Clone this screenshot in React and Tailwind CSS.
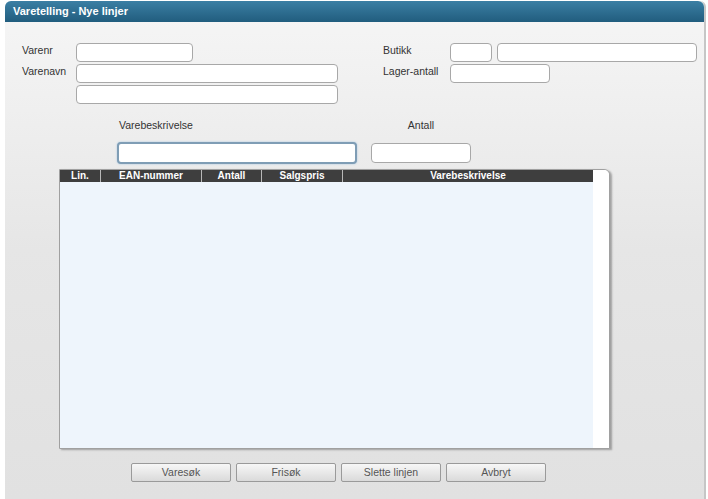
import React from 'react';

const font = { fontFamily: '"Liberation Sans", Arial, sans-serif' };

function Field({ className = '' }) {
  return <div className={`h-[19px] bg-white border border-[#a8a8a8] rounded-[4px] ${className}`} />;
}

function Label({ children, className = '' }) {
  return <div className={`text-[10.5px] leading-[12px] pt-[1px] text-[#333] ${className}`}>{children}</div>;
}

const cols = [
  { name: 'Lin.', w: 'w-[41px]' },
  { name: 'EAN-nummer', w: 'w-[101px]' },
  { name: 'Antall', w: 'w-[60px]' },
  { name: 'Salgspris', w: 'w-[81px]' },
];

const buttons = ['Varesøk', 'Frisøk', 'Slette linjen', 'Avbryt'];

export default function App() {
  return (
    <div className="w-[708px] h-[499px] bg-white overflow-hidden" style={font}>
      <div className="ml-[5px] mt-[1px] w-[701px] h-[498px] flex flex-col rounded-t-[6px] bg-gradient-to-b from-[#f6f6f6] via-[#e6e6e6] to-[#e1e1e1] border-r-2 border-[#c6c6c6]">
        <div className="h-[21px] shrink-0 rounded-t-[6px] bg-gradient-to-b from-[#3b7fa4] to-[#215d7e] text-white font-bold text-[11px] pl-[8px] flex items-center">
          Varetelling - Nye linjer
        </div>

        <div className="flex flex-col pl-[17px] pt-[21px]">
          {/* top fields */}
          <div className="flex">
            <div className="w-[361px] flex flex-col gap-[2px]">
              <div className="flex">
                <Label className="w-[54px]">Varenr</Label>
                <Field className="w-[117px]" />
              </div>
              <div className="flex">
                <Label className="w-[54px]">Varenavn</Label>
                <Field className="w-[262px]" />
              </div>
              <div className="flex">
                <div className="w-[54px]" />
                <Field className="w-[262px]" />
              </div>
            </div>
            <div className="flex flex-col gap-[2px]">
              <div className="flex">
                <Label className="w-[67px]">Butikk</Label>
                <Field className="w-[42px]" />
                <Field className="w-[200px] ml-[5px]" />
              </div>
              <div className="flex">
                <Label className="w-[67px]">Lager-antall</Label>
                <Field className="w-[100px]" />
              </div>
            </div>
          </div>

          {/* description + amount */}
          <div className="flex ml-[95px] mt-[14px]">
            <Label className="w-[254px] pl-[2px]">Varebeskrivelse</Label>
            <Label className="w-[100px] text-center">Antall</Label>
          </div>
          <div className="flex ml-[95px] mt-[11px]">
            <div className="w-[240px] h-[22px] bg-white border-2 border-[#7f9db5] rounded-[4px] shadow-[0_0_2px_#9fc3df]" />
            <Field className="w-[100px] h-[20px] ml-[14px] mt-[1px]" />
          </div>

          {/* table */}
          <div className="ml-[37px] mt-[5px] w-[551px] h-[280px] flex bg-white border border-[#a0a0a0] rounded-tr-[6px] shadow-[2px_1px_2px_rgba(0,0,0,0.3)] overflow-hidden">
            <div className="w-[533px] flex flex-col">
              <div className="h-[12px] bg-[#3e3e3e] flex text-white font-bold text-[10px] leading-[12px]">
                {cols.map((c) => (
                  <div key={c.name} className={`${c.w} text-center border-r border-[#b8b8b8]`}>{c.name}</div>
                ))}
                <div className="flex-1 text-center">Varebeskrivelse</div>
              </div>
              <div className="flex-1 bg-[#eef5fc]" />
            </div>
            <div className="flex-1 bg-white" />
          </div>

          {/* buttons */}
          <div className="flex ml-[109px] mt-[14px] gap-[5px]">
            {buttons.map((b) => (
              <button
                key={b}
                className="w-[100px] h-[19px] border border-[#9a9a9a] rounded-[2px] bg-gradient-to-b from-[#f7f7f7] to-[#dadada] text-[10.5px] text-[#555]"
                style={font}
              >
                {b}
              </button>
            ))}
          </div>
        </div>
      </div>
    </div>
  );
}
